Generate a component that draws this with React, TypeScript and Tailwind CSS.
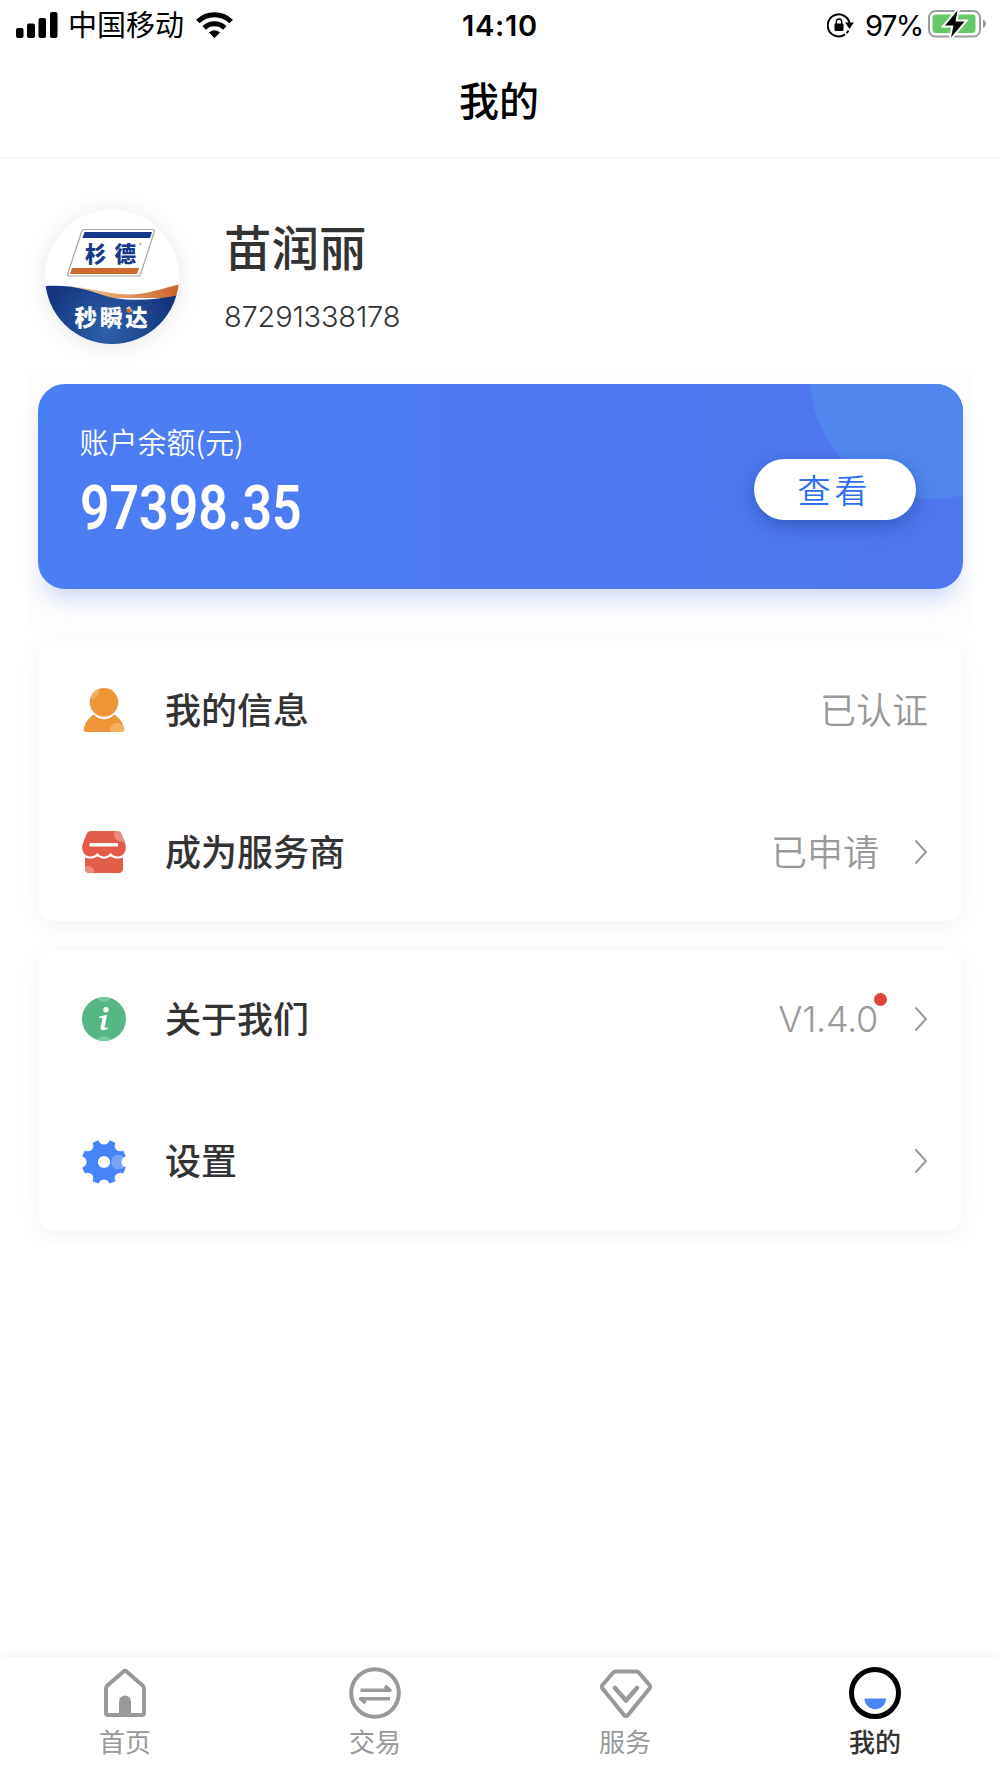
import React from "react";

const PersonIcon = () => (
  <svg className="mt-1" width="44" height="48" viewBox="0 0 44 48" fill="#f09537">
    <path d="M12 18.500C15 22 18.500 23.200 22 23.200S29 22 32 18.500C37.500 21.500 41 27 42.200 32.500C42.700 34.600 41.500 36 39.500 36H4.500C2.500 36 1.300 34.600 1.800 32.500C3 27 6.500 21.500 12 18.500Z" transform="translate(0 8)" />
    <path d="M28.200 44A7.200 7.200 0 0 1 42 39.800C43 42.600 41.500 44 39.500 44Z" fill="#f0b25f" />
    <circle cx="22" cy="14.300" r="14.300" />
    <path d="M8 10.500A14.500 14.500 0 0 1 16.500 1.100A7 7 0 0 1 8 10.500Z" fill="#f0b25f" />
  </svg>
);

const StoreIcon = () => (
  <svg width="44" height="42" viewBox="0 0 44 42">
    <path
      d="M9 0H35C37 0 38.500 1 39.300 2.800L43 12C45.500 19 42 25.500 36 25.500C33 25.500 30.500 24.500 28.500 22C26.700 24.500 24.500 25.500 22 25.500S17.300 24.500 15.500 22C13.500 24.500 11 25.500 8 25.500C2 25.500-1.500 19 1 12L4.700 2.800C5.500 1 7 0 9 0Z"
      fill="#e25d48"
    />
    <path
      d="M3 26.500C7.500 28.200 12 27.700 15.500 25.200C19.500 28.500 24.500 28.500 28.500 25.200C32 27.700 36.500 28.200 41 26.500V38C41 40.300 39.500 42 37 42H7C4.500 42 3 40.300 3 38Z"
      fill="#e25d48"
    />
    <path d="M33 0C37 0 38.500 1 39.300 2.800L43 11C37 12.500 29.500 7 33 0Z" fill="#e98b7e" />
    <path d="M3 35.500C8 33.500 13 37 12 42H7C4.500 42 3 40.300 3 38Z" fill="#e98b7e" />
    <rect x="7.500" y="12" width="28.500" height="3.400" rx="1" fill="#fff" />
  </svg>
);

const InfoIcon = () => (
  <svg width="44" height="44" viewBox="0 0 44 44">
    <circle cx="22" cy="22" r="22" fill="#55b785" />
    <path d="M15.500 1A22 22 0 0 1 28.500 1C25 6.300 19 6.300 15.500 1Z" fill="#76cba2" />
    <path d="M15.500 43A22 22 0 0 0 28.500 43C25 37.700 19 37.700 15.500 43Z" fill="#76cba2" />
    <circle cx="24" cy="12.700" r="2.700" fill="#fff" />
    <path d="M17.300 19.800C19.500 19 22 18.200 25 18L22.800 29C22.500 30.800 23.300 31.200 26 30.600L25.700 32C21.500 34 17.900 33.500 18.700 29.700L20.600 20.900L17.300 21.100Z" fill="#fff" />
  </svg>
);

const notches = [0, 45, 90, 135, 180, 225, 270, 315];

const GearIcon = () => (
  <svg className="mt-px" width="44" height="44" viewBox="0 0 44 44">
    <circle cx="22" cy="22" r="22.300" fill="#4684f7" />
    <circle cx="36.500" cy="22" r="7.300" fill="#77a5f9" />
    {notches.map((a) => (
      <circle key={a} cx="45" cy="22" r="5.600" fill="#fff" transform={`rotate(${a} 22 22)`} />
    ))}
    <circle cx="22" cy="22" r="6.100" fill="#fff" />
  </svg>
);

const Chevron = () => (
  <svg className="ml-9" width="13" height="26" viewBox="0 0 13 26" fill="none" stroke="#999" strokeWidth="2">
    <path d="M.5 1.500L11 13L.5 24.500" />
  </svg>
);

const Logo = () => (
  <svg width="134" height="134" viewBox="0 0 134 134">
    <defs>
      <clipPath id="round">
        <circle cx="67" cy="67" r="67" />
      </clipPath>
      <radialGradient id="sea" gradientUnits="userSpaceOnUse" cx="62" cy="120" r="66">
        <stop offset="0" stopColor="#2c62ab" />
        <stop offset="1" stopColor="#15347f" />
      </radialGradient>
      <linearGradient id="sand" x1="0" x2="1">
        <stop offset="0" stopColor="#f3dcb8" />
        <stop offset=".45" stopColor="#e3a269" />
        <stop offset="1" stopColor="#cb6229" />
      </linearGradient>
    </defs>
    <g clipPath="url(#round)">
      <rect width="134" height="134" fill="#fff" />
      <path d="M20 76C45 77 60 84 82 84.500C104 84.500 118 78 134 74.500V88H60Z" fill="url(#sand)" />
      <path d="M0 76C15 75 28 76 42 80C58 85 68 89.500 88 89.800C104 90 120 88 134 85V134H0Z" fill="url(#sea)" />
      <path d="M39 19.500H107.500Q110 19.500 109.200 22L95.800 63.500Q95 66 92.500 66H24.500Q22 66 22.800 63.500L36.500 22Q37 19.500 39 19.500Z" fill="#fff" stroke="#a6a6a6" strokeWidth="1.200" />
      <path d="M39.500 22H107L105 28H37.500Z" fill="#17398a" />
      <path d="M27 58H94L92 64H25Z" fill="#cd6a30" />
      <g className="font-['Noto_Sans_CJK_SC',sans-serif] font-black">
        <text x="40" y="52" fontSize="21.500" fill="#17398a">杉</text>
        <text x="69.500" y="52" fontSize="21.500" fill="#17398a">德</text>
        <text x="94" y="37" fontSize="5" fill="#999">®</text>
        <text x="29.500" y="115.500" fontSize="22.500" letterSpacing="2.900" fill="#fff">秒瞬达</text>
      </g>
      <circle cx="83.700" cy="100.500" r="2.300" fill="#cd6a30" />
    </g>
  </svg>
);

const StatusBar = () => (
  <div className="flex h-12 items-center pl-4 pr-3">
    <svg width="42" height="27" viewBox="0 0 42 27">
      <rect x="0" y="17" width="7.500" height="10" rx="2" />
      <rect x="11" y="12.500" width="8" height="14.500" rx="2" />
      <rect x="22.500" y="7" width="7.500" height="20" rx="2" />
      <rect x="34" y="1" width="7.500" height="26" rx="2" />
    </svg>
    <span className="ml-[10px] w-[116px] whitespace-nowrap pb-px text-[29px] leading-none">中国移动</span>
    <svg className="ml-3" width="37" height="27" viewBox="0 0 37 27" fill="none" stroke="#000">
      <path d="M1.800 10.500A24 24 0 0 1 35.200 10.500" strokeWidth="5" />
      <path d="M8.200 17A14.800 14.800 0 0 1 28.800 17" strokeWidth="5" />
      <path d="M13 21.500Q18.500 17 24 21.500L18.500 27Z" fill="#000" stroke="none" />
    </svg>
    <span className="ml-[229px] w-[76px] whitespace-nowrap pt-[2px] font-['Inter',sans-serif] text-[29px] font-semibold leading-none tracking-[0.700px]">
      14:10
    </span>
    <svg className="ml-auto mt-[2px]" width="27" height="26" viewBox="0 0 27 26" fill="none" stroke="#000" strokeWidth="2">
      <path d="M18 22.400A11 11 0 1 1 22.700 13" />
      <path d="M18 10.500H27L22.500 17Z" fill="#000" stroke="none" />
      <rect x="7.500" y="11.500" width="9" height="7.500" rx="1" fill="#000" stroke="none" />
      <path d="M9.300 12V9.700A2.700 2.700 0 0 1 14.700 9.700V12" strokeWidth="1.400" />
      <path d="M21.500 18.500A11 11 0 0 1 19.500 21" />
    </svg>
    <span className="ml-[11px] w-[59px] whitespace-nowrap pt-[2px] font-['Inter',sans-serif] text-[29px] leading-none tracking-[-1.500px]">
      97%
    </span>
    <svg className="ml-1" width="60" height="32" viewBox="0 0 60 32">
      <rect x="1" y="3" width="51" height="25.500" rx="6.500" fill="none" stroke="#9d9d9d" strokeWidth="2" />
      <rect x="4.500" y="6.500" width="43" height="18.500" rx="3.500" fill="#65c766" />
      <path d="M55 11.500C59 13 59 18.500 55 20Z" fill="#9d9d9d" />
      <path d="M29.500 2.500L17 17.500H25.500L23 29.500L36.500 13.500H27.500Z" fill="#000" stroke="#fff" strokeWidth="4" paintOrder="stroke" />
    </svg>
  </div>
);

const Row: React.FC<{ icon: React.ReactNode; label: string; value?: string; arrow?: boolean; dot?: boolean }> = ({
  icon,
  label,
  value,
  arrow,
  dot,
}) => (
  <div className="flex h-[100px] items-center pl-[43px] pr-[33px]">
    {icon}
    <span className="ml-[39px] pb-1 text-[36px] font-medium leading-none text-[#333]">{label}</span>
    <span
      className={`relative ml-auto leading-none text-[#999] ${
        dot
          ? "mr-px font-['Inter',sans-serif] text-[36px] font-[350] tracking-[-0.300px]"
          : "pb-1 text-[36px] font-[350]"
      }`}
    >
      {value}
      {dot && <i className="absolute -right-[9px] -top-[8px] size-[13px] rounded-full bg-[#e0433b]" />}
    </span>
    {arrow && <Chevron />}
  </div>
);

const Card: React.FC<{ children: React.ReactNode }> = ({ children }) => (
  <div className="overflow-hidden px-[39px] pb-[15px] pt-[14px]">
    <div className="flex h-[280px] flex-col justify-center gap-[42px] rounded-[14px] bg-white shadow-[0_4px_24px_rgba(0,0,0,0.06)]">
      {children}
    </div>
  </div>
);

const tabs = [
  {
    name: "首页",
    icon: (
      <g>
        <path d="M24.500 4.500Q26 3.200 27.500 4.500L43.500 18.500Q45 19.800 45 21.500V46Q45 48 43 48H9Q7 48 7 46V21.500Q7 19.800 8.500 18.500Z" strokeWidth="4" strokeLinejoin="round" />
        <path d="M20 48V34.500A6 6 0 0 1 32 34.500V48Z" fill="#999" stroke="none" />
      </g>
    ),
  },
  {
    name: "交易",
    icon: (
      <g>
        <circle cx="26" cy="26" r="23.800" strokeWidth="4" />
        <path d="M11.500 23.300H41L36 19" strokeWidth="3.600" strokeLinejoin="round" />
        <path d="M41 31.700H11.500L16.500 36" strokeWidth="3.600" strokeLinejoin="round" />
      </g>
    ),
  },
  {
    name: "服务",
    icon: (
      <g strokeWidth="4" strokeLinejoin="round" strokeLinecap="round">
        <path d="M16.500 4.500H37.500Q39 4.500 40 5.700L50.500 18Q51.700 19.800 50.500 21.500L29 48Q27 50 25 48L3.500 21.500Q2.300 19.800 3.500 18L14 5.700Q15 4.500 16.500 4.500Z" />
        <path d="M16 21L27 33.500L38 21" strokeWidth="4.500" />
      </g>
    ),
  },
  {
    name: "我的",
    active: true,
    icon: (
      <g>
        <circle cx="26" cy="26" r="23.500" stroke="#000" strokeWidth="5" />
        <path d="M15.500 31.500H37A10.700 10.700 0 0 1 15.500 31.500Z" fill="#4a86f5" stroke="none" />
      </g>
    ),
  },
];

const TabBar = () => (
  <nav className="mt-auto flex h-[121px] bg-white pt-[10px] shadow-[0_-2px_8px_rgba(0,0,0,0.05)]">
    {tabs.map((tab) => (
      <div key={tab.name} className="flex flex-1 flex-col items-center">
        <svg width="53" height="53" viewBox="0 0 53 53" fill="none" stroke="#999">
          {tab.icon}
        </svg>
        <span className={`mt-2 text-[26px] leading-none ${tab.active ? "font-medium text-[#333]" : "text-[#999]"}`}>
          {tab.name}
        </span>
      </div>
    ))}
  </nav>
);

const App: React.FC = () => {
  return (
    <div className="flex h-[1778px] w-[1000px] flex-col overflow-hidden bg-white font-['Noto_Sans_CJK_SC',sans-serif] text-black">
      <StatusBar />
      <header className="flex h-[111px] items-center justify-center border-b-2 border-[#f6f6f6] pb-[7px] pr-[2px]">
        <h1 className="text-[40px] font-medium leading-none">我的</h1>
      </header>

      {/* Profile */}
      <section className="flex h-[214px] pl-[45px] pt-[51px]">
        <div className="size-[134px] rounded-full shadow-[0_2px_24px_rgba(0,0,0,0.1)]">
          <Logo />
        </div>
        <div className="ml-[45px] pt-[12px] text-[#333]">
          <h2 className="text-[47.500px] font-medium leading-none">苗润丽</h2>
          <p className="mt-[32px] font-['Inter',sans-serif] text-[29px] font-[350] leading-none tracking-[-0.200px]">
            87291338178
          </p>
        </div>
      </section>

      {/* Balance */}
      <section className="mx-[27px] h-[254px] shrink-0 bg-[#fdfdfd] px-[10.500px] pt-[10.500px]">
        <div className="relative h-[205px] rounded-[27px] bg-linear-to-r from-[#4a7ef5] to-[#4d77ec] shadow-[0_14px_20px_-4px_rgba(77,120,237,0.25)]">
          <div className="absolute inset-0 overflow-hidden rounded-[27px]">
            <div className="absolute -top-[129px] left-[772px] size-[244px] rounded-full bg-[#5087ee]" />
          </div>
          <div className="relative flex h-full items-center justify-between pl-[42px] pr-[47px]">
            <div className="pb-[5px] text-white">
              <p className="text-[29px] font-[350] leading-none">账户余额(元)</p>
              <p className="mt-[23px] origin-left scale-x-[0.855] font-['Roboto',sans-serif] text-[60.500px] font-semibold leading-none">
                97398.35
              </p>
            </div>
            <button className="mt-[7px] h-[61px] w-[162px] rounded-full bg-white text-[33px] font-[350] leading-none tracking-[4px] text-[#2f6ff5] shadow-[0_6px_18px_rgba(20,60,140,0.45)]">
              查看
            </button>
          </div>
        </div>
      </section>

      <Card>
        <Row icon={<PersonIcon />} label="我的信息" value="已认证" />
        <Row icon={<StoreIcon />} label="成为服务商" value="已申请" arrow />
      </Card>
      <Card>
        <Row icon={<InfoIcon />} label="关于我们" value="V1.4.0" arrow dot />
        <Row icon={<GearIcon />} label="设置" arrow />
      </Card>

      <TabBar />
    </div>
  );
};

export default App;
